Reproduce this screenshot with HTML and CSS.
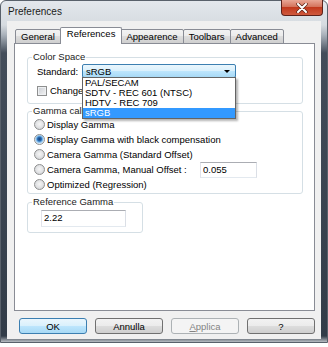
FILE: index.html
```html
<!DOCTYPE html>
<html lang="it">
<head>
  <meta charset="UTF-8">
  <title>Preferences</title>
  <link rel="stylesheet" href="styles.css">
</head>
<body>

  <div class="window">
    <div class="titlebar">
      <span class="title">Preferences</span>
      <div class="close">
        <svg width="12" height="10" viewBox="0 0 12 10">
          <path d="M2 1 L10 9 M10 1 L2 9" stroke="#5a2418" stroke-width="3.4" stroke-linecap="round"/>
          <path d="M2 1 L10 9 M10 1 L2 9" stroke="#fff" stroke-width="2" stroke-linecap="round"/>
        </svg>
      </div>
    </div>

    <div class="client">
      <div class="tabs">
        <div class="tab">General</div>
        <div class="tab active">References</div>
        <div class="tab">Appearence</div>
        <div class="tab">Toolbars</div>
        <div class="tab">Advanced</div>
      </div>

      <div class="panel">
        <fieldset class="group">
          <legend>Color Space</legend>
          <div class="std-row">
            <span class="std-label">Standard:</span>
            <div class="combo">
              <span>sRGB</span>
              <span class="arrow"></span>
              <ul class="droplist">
                <li>PAL/SECAM</li>
                <li>SDTV - REC 601 (NTSC)</li>
                <li>HDTV - REC 709</li>
                <li class="selected">sRGB</li>
              </ul>
            </div>
          </div>
          <div class="check-row">
            <span class="checkbox"></span>
            <span>Change gamma</span>
          </div>
        </fieldset>

        <fieldset class="group gamma">
          <legend>Gamma calibration</legend>
          <div class="radio-row"><span class="radio"></span>Display Gamma</div>
          <div class="radio-row"><span class="radio checked"></span>Display Gamma with black compensation</div>
          <div class="radio-row"><span class="radio"></span>Camera Gamma (Standard Offset)</div>
          <div class="radio-row">
            <span class="radio"></span>
            <span class="offset-label">Camera Gamma, Manual Offset :</span>
            <input class="field offset" type="text" value="0.055">
          </div>
          <div class="radio-row"><span class="radio"></span>Optimized (Regression)</div>
        </fieldset>

        <fieldset class="group refgamma">
          <legend>Reference Gamma</legend>
          <input class="field ref" type="text" value="2.22">
        </fieldset>
      </div>

      <div class="buttons">
        <button class="btn default">OK</button>
        <button class="btn">Annulla</button>
        <button class="btn" disabled><u>A</u>pplica</button>
        <button class="btn">?</button>
      </div>
    </div>
  </div>

</body>
</html>
```

FILE: styles.css
```css
* {
  box-sizing: border-box;
}
body {
  margin: 0;
  background: #fff;
  font-family: "Liberation Sans", Arial, sans-serif;
  font-size: 9.5px;
  color: #000;
}
.window {
  width: 328px;
  height: 343px;
  border: 1px solid #59616b;
  border-radius: 6px 6px 0 0;
  background: linear-gradient(to bottom, #e3e7ec 0, #d6dbe0 24px, #a9b1ba 34px, #434d5a 52px, #323c48 calc(100% - 6px), #b9bec4 100%);
  display: flex;
  flex-direction: column;
}
.titlebar {
  height: 20px;
  display: flex;
  justify-content: space-between;
  align-items: flex-start;
}
.title {
  padding: 5px 0 0 7px;
  font-size: 10px;
  line-height: 12px;
  color: #1b1b1b;
}
.close {
  width: 42px;
  height: 16px;
  margin: -1px 4px 0 0;
  border: 1px solid #5d2119;
  border-top: none;
  border-radius: 0 0 4px 4px;
  background: linear-gradient(#e9a796, #d4735c 45%, #c2391d 50%, #cf5a3e);
  display: flex;
  align-items: center;
  justify-content: center;
}

.client {
  flex: 1;
  margin: 0 6px 3px;
  background: #f0f0f0;
  padding: 6px 6px 0 7px;
  display: flex;
  flex-direction: column;
}
.tabs {
  display: flex;
  align-items: flex-end;
  padding-left: 1px;
  margin-bottom: -1px;
  position: relative;
  z-index: 1;
}
.tab {
  height: 15px;
  padding: 0 5px;
  margin-left: -1px;
  border: 1px solid #898c95;
  border-radius: 2px 2px 0 0;
  background: linear-gradient(#f2f2f2, #ebebeb 50%, #dddddd 50%, #cfcfcf);
  line-height: 13px;
}
.tab:first-child {
  margin-left: 0;
}
.tab.active {
  height: 17px;
  margin: 0 -1px;
  padding: 0 6px;
  border-bottom: none;
  background: #fff;
  line-height: 12px;
  position: relative;
  z-index: 2;
}
.panel {
  height: 268px;
  background: #fff;
  border: 1px solid #898c95;
  padding: 7px 11px 0 12px;
}

.group {
  margin: 0;
  min-width: 0;
  padding: 0 5px 7px 5px;
  border: 1px solid #d5dfe5;
  border-radius: 3px;
}
.group legend {
  margin-left: -1px;
  padding: 0 1px;
  line-height: 12px;
  color: #222;
}
.gamma {
  margin-top: 1px;
  padding-bottom: 1px;
}
.refgamma {
  width: 116px;
  margin-top: 2px;
  padding-bottom: 5px;
}

.std-row {
  display: flex;
  align-items: center;
  height: 14px;
  margin: 1px 0 0 4px;
}
.std-label {
  width: 45px;
}
.combo {
  position: relative;
  width: 154px;
  height: 14px;
  border: 1px solid #3c7fb1;
  border-radius: 2px;
  background: linear-gradient(#eaf6fd, #d9f0fc 50%, #bee6fd 50%, #a7d9f5);
  display: flex;
  align-items: center;
  justify-content: space-between;
  padding: 0 5px 0 3px;
}
.arrow {
  border-left: 3px solid transparent;
  border-right: 3px solid transparent;
  border-top: 3px solid #000;
}
/* open dropdown, drawn over the groups below */
.droplist {
  position: absolute;
  left: -1px;
  top: 100%;
  width: 154px;
  margin: 0;
  padding: 0;
  list-style: none;
  background: #fff;
  border: 1px solid #646464;
  box-shadow: 2px 2px 2px rgba(0, 0, 0, 0.3);
  z-index: 5;
}
.droplist li {
  height: 10px;
  line-height: 10px;
  padding-left: 2px;
  white-space: nowrap;
}
.droplist li.selected {
  background: #3399ff;
  color: #fff;
}

.check-row {
  display: flex;
  align-items: center;
  gap: 3px;
  height: 11px;
  margin: 7px 0 0 4px;
  white-space: nowrap;
}
.checkbox {
  width: 10px;
  height: 10px;
  border: 1px solid #8e8f8f;
  background: linear-gradient(135deg, #c9cdd3, #f4f4f4);
  box-shadow: inset 0 0 0 1px #eef0f2;
}

.radio-row {
  display: flex;
  align-items: center;
  gap: 2px;
  height: 15px;
  margin-left: 1px;
  white-space: nowrap;
}
.radio {
  width: 11px;
  height: 11px;
  border-radius: 50%;
  border: 1px solid #8e8f8f;
  background: radial-gradient(circle at 50% 45%, #f6f6f6 0, #e2e3e5 50%, #c8cacd 100%);
}
.radio.checked {
  background: radial-gradient(circle at 50% 45%, #173f75 0, #2a6cb3 2px, #6fb0e6 3px, #dcebf8 4.5px);
}
.offset-label {
  width: 151px;
}

.field {
  font: inherit;
  color: #000;
  padding: 0 2px;
  border: 1px solid;
  border-color: #abadb3 #dbdfe6 #e3e9ef #e2e3ea;
  background: #fff;
}
.offset {
  width: 57px;
  height: 16px;
}
.ref {
  display: block;
  width: 85px;
  height: 17px;
  margin: 2px 0 0 8px;
  padding-bottom: 3px;
}

.buttons {
  display: flex;
  justify-content: flex-end;
  gap: 8px;
  margin-top: 7px;
}
.btn {
  width: 68px;
  height: 16px;
  padding: 0;
  font: inherit;
  color: #000;
  border: 1px solid #707070;
  border-radius: 3px;
  background: linear-gradient(#f2f2f2, #ebebeb 50%, #dddddd 50%, #cfcfcf);
}
.btn.default {
  border-color: #3c7fb1;
  background: linear-gradient(#eaf6fd, #d9f0fc 50%, #bee6fd 50%, #a7d9f5);
}
.btn:disabled {
  border-color: #adb2b5;
  background: #f4f4f4;
  color: #838383;
}
```
